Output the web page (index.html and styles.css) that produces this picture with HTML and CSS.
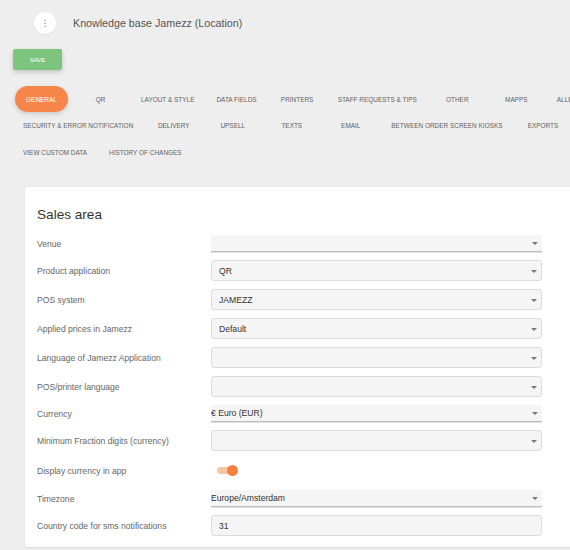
FILE: index.html
```html
<!DOCTYPE html>
<html>
<head>
<meta charset="utf-8">
<link rel="stylesheet" href="styles.css">
</head>
<body>
<div class="page">
  <header class="header">
    <button class="menu-btn" aria-label="menu">
      <svg width="4" height="9" viewBox="0 0 4 9"><circle cx="2" cy="1.5" r="0.8" fill="#999"/><circle cx="2" cy="4.5" r="0.8" fill="#999"/><circle cx="2" cy="7.5" r="0.8" fill="#999"/></svg>
    </button>
    <h1 class="title">Knowledge base Jamezz (Location)</h1>
  </header>
  <button class="save">SAVE</button>
  <nav class="tabs">
    <span class="tab active">GENERAL</span>
    <span class="tab">QR</span>
    <span class="tab">LAYOUT &amp; STYLE</span>
    <span class="tab">DATA FIELDS</span>
    <span class="tab">PRINTERS</span>
    <span class="tab">STAFF REQUESTS &amp; TIPS</span>
    <span class="tab">OTHER</span>
    <span class="tab">MAPPS</span>
    <span class="tab">ALLERGENS</span>
    <span class="tab">SECURITY &amp; ERROR NOTIFICATION</span>
    <span class="tab">DELIVERY</span>
    <span class="tab">UPSELL</span>
    <span class="tab">TEXTS</span>
    <span class="tab">EMAIL</span>
    <span class="tab">BETWEEN ORDER SCREEN KIOSKS</span>
    <span class="tab">EXPORTS</span>
    <span class="tab">VIEW CUSTOM DATA</span>
    <span class="tab">HISTORY OF CHANGES</span>
  </nav>
  <section class="card">
    <h2 class="card-title">Sales area</h2>
    <div class="form">
      <div class="row"><label class="label">Venue</label><div class="ctrl line"><span class="val"></span><i class="caret"></i></div></div>
      <div class="row"><label class="label">Product application</label><div class="ctrl box"><span class="val">QR</span><i class="caret"></i></div></div>
      <div class="row"><label class="label">POS system</label><div class="ctrl box"><span class="val">JAMEZZ</span><i class="caret"></i></div></div>
      <div class="row"><label class="label">Applied prices in Jamezz</label><div class="ctrl box"><span class="val">Default</span><i class="caret"></i></div></div>
      <div class="row"><label class="label">Language of Jamezz Application</label><div class="ctrl box"><span class="val"></span><i class="caret"></i></div></div>
      <div class="row"><label class="label">POS/printer language</label><div class="ctrl box"><span class="val"></span><i class="caret"></i></div></div>
      <div class="row"><label class="label">Currency</label><div class="ctrl line"><span class="val">€ Euro (EUR)</span><i class="caret"></i></div></div>
      <div class="row"><label class="label">Minimum Fraction digits (currency)</label><div class="ctrl box"><span class="val"></span><i class="caret"></i></div></div>
      <div class="row toggle-row"><label class="label">Display currency in app</label><div class="toggle"><span class="track"></span><span class="knob"></span></div></div>
      <div class="row"><label class="label">Timezone</label><div class="ctrl line"><span class="val">Europe/Amsterdam</span><i class="caret"></i></div></div>
      <div class="row"><label class="label">Country code for sms notifications</label><div class="ctrl box"><span class="val">31</span></div></div>
    </div>
  </section>
</div>
</body>
</html>
```
FILE: styles.css
```css
html, body {
  margin: 0;
  padding: 0;
  overflow: hidden;
  background: #eeeeee;
  font-family: "Liberation Sans", Arial, sans-serif;
}
.page {
  width: 640px;
  padding-bottom: 20px;
}
.header {
  display: flex;
  align-items: center;
  gap: 17px;
  padding: 12px 0 0 34px;
  height: 22px;
}
.menu-btn {
  width: 22px;
  height: 22px;
  border-radius: 50%;
  border: none;
  background: #fff;
  box-shadow: 0 1px 2px rgba(0,0,0,0.06);
  display: flex;
  align-items: center;
  justify-content: center;
  padding: 0;
}
.title {
  margin: 0;
  font-size: 10.7px;
  font-weight: normal;
  color: #555;
  line-height: 22px;
}
.save {
  display: block;
  margin: 15px 0 0 13px;
  width: 49px;
  height: 21px;
  border: none;
  border-radius: 2px;
  background: #7dc57f;
  color: #fff;
  font-family: "Liberation Sans", Arial, sans-serif;
  font-size: 6px;
  padding: 0;
  box-shadow: 0 2px 5px rgba(0,0,0,0.18);
}
.tabs {
  display: flex;
  flex-wrap: wrap;
  column-gap: 6px;
  width: 620px;
  margin-top: 16px;
  padding-left: 15px;
}
.tab {
  height: 26.5px;
  min-width: 53px;
  box-sizing: border-box;
  padding: 0 8px;
  display: flex;
  align-items: center;
  justify-content: center;
  font-size: 6.45px;
  color: #5f5f5f;
  white-space: nowrap;
}
.tab.active {
  height: 26px;
  background: #f6854a;
  color: #fff;
  border-radius: 13px;
  box-shadow: 0 2px 5px rgba(0,0,0,0.15);
}
.card {
  margin: 21.5px 0 0 25px;
  width: 600px;
  background: #fff;
  border-radius: 3px;
  box-shadow: 0 1px 2px rgba(0,0,0,0.08);
  padding: 19px 12px 11px;
  box-sizing: border-box;
}
.card-title {
  margin: 0 0 11px;
  font-size: 13.6px;
  line-height: 18px;
  font-weight: normal;
  color: #333;
}
.form {
  display: flex;
  flex-direction: column;
  gap: 8px;
}
.row {
  display: grid;
  grid-template-columns: 174px 331px;
  align-items: center;
}
.label {
  font-size: 8.6px;
  color: #666;
}
.ctrl {
  position: relative;
  display: flex;
  align-items: center;
  box-sizing: border-box;
  background: #f5f5f5;
  font-size: 8.6px;
  color: #333;
}
.ctrl.box {
  height: 21px;
  border: 1px solid #dcdcdc;
  border-radius: 3px;
  padding-left: 7px;
}
.ctrl.line {
  height: 17px;
  border-bottom: 1px solid #bdbdbd;
  box-shadow: 0 1px 0 #e2e2e2;
}
.caret {
  position: absolute;
  right: 4px;
  top: 50%;
  margin-top: -1px;
  width: 0;
  height: 0;
  border-left: 3px solid transparent;
  border-right: 3px solid transparent;
  border-top: 3px solid #777;
}
.toggle-row {
  height: 23px;
}
.toggle {
  position: relative;
  width: 27px;
  height: 11px;
  margin-left: 6px;
}
.track {
  position: absolute;
  left: 0;
  top: 2px;
  width: 18px;
  height: 7px;
  border-radius: 4px;
  background: #f8c3a3;
}
.knob {
  position: absolute;
  left: 10px;
  top: 0;
  width: 11px;
  height: 11px;
  border-radius: 50%;
  background: #f5803e;
}
```
